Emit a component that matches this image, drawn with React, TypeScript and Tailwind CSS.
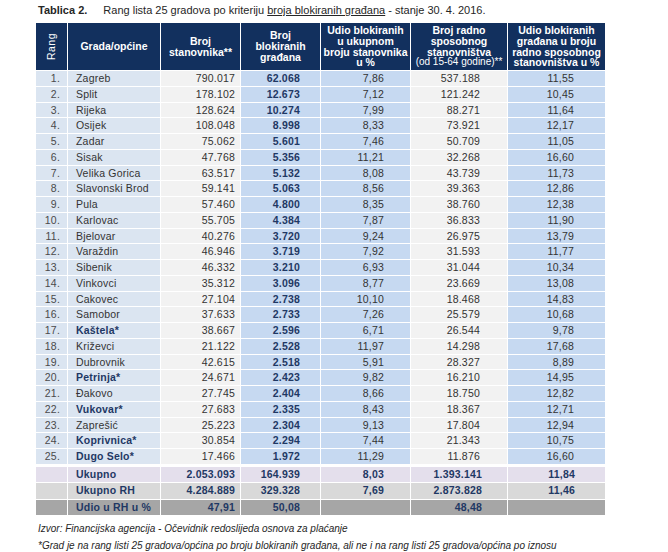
const rows: [string, string, string, string, string, string, boolean][] = [
  ["Zagreb", "790.017", "62.068", "7,86", "537.188", "11,55", false],
  ["Split", "178.102", "12.673", "7,12", "121.242", "10,45", false],
  ["Rijeka", "128.624", "10.274", "7,99", "88.271", "11,64", false],
  ["Osijek", "108.048", "8.998", "8,33", "73.921", "12,17", false],
  ["Zadar", "75.062", "5.601", "7,46", "50.709", "11,05", false],
  ["Sisak", "47.768", "5.356", "11,21", "32.268", "16,60", false],
  ["Velika Gorica", "63.517", "5.132", "8,08", "43.739", "11,73", false],
  ["Slavonski Brod", "59.141", "5.063", "8,56", "39.363", "12,86", false],
  ["Pula", "57.460", "4.800", "8,35", "38.760", "12,38", false],
  ["Karlovac", "55.705", "4.384", "7,87", "36.833", "11,90", false],
  ["Bjelovar", "40.276", "3.720", "9,24", "26.975", "13,79", false],
  ["Varaždin", "46.946", "3.719", "7,92", "31.593", "11,77", false],
  ["Sibenik", "46.332", "3.210", "6,93", "31.044", "10,34", false],
  ["Vinkovci", "35.312", "3.096", "8,77", "23.669", "13,08", false],
  ["Cakovec", "27.104", "2.738", "10,10", "18.468", "14,83", false],
  ["Samobor", "37.633", "2.733", "7,26", "25.579", "10,68", false],
  ["Kaštela*", "38.667", "2.596", "6,71", "26.544", "9,78", true],
  ["Križevci", "21.122", "2.528", "11,97", "14.298", "17,68", false],
  ["Dubrovnik", "42.615", "2.518", "5,91", "28.327", "8,89", false],
  ["Petrinja*", "24.671", "2.423", "9,82", "16.210", "14,95", true],
  ["Đakovo", "27.745", "2.404", "8,66", "18.750", "12,82", false],
  ["Vukovar*", "27.683", "2.335", "8,43", "18.367", "12,71", true],
  ["Zaprešić", "25.223", "2.304", "9,13", "17.804", "12,94", false],
  ["Koprivnica*", "30.854", "2.294", "7,44", "21.343", "10,75", true],
  ["Dugo Selo*", "17.466", "1.972", "11,29", "11.876", "16,60", true],
];

const totals = [
  { label: "Ukupno", bg: "bg-[#e4dfec]", v: ["2.053.093", "164.939", "8,03", "1.393.141", "11,84"] },
  { label: "Ukupno RH", bg: "bg-[#d9d9d9]", v: ["4.284.889", "329.328", "7,69", "2.873.828", "11,46"] },
  { label: "Udio u RH u %", bg: "bg-[#a6a6a6]", v: ["47,91", "50,08", "", "48,48", ""] },
];

const cols = "grid grid-cols-[31px_92px_79px_79px_89px_96px_97px] gap-x-[1px]";

const App = () => {
  return (
    <div className="h-[552px] w-[668px] overflow-hidden bg-white pl-[36px] pt-[4px] font-['Liberation_Sans',Arial,sans-serif] text-[#333]">
      <p className="h-[19px] pl-[2px] text-[11px] leading-[13px] text-[#262626]">
        <span className="mr-[16px] font-bold">Tablica 2.</span>
        Rang lista 25 gradova po kriteriju <span className="underline">broja blokiranih građana</span> - stanje 30. 4. 2016.
      </p>

      <div className="flex w-[569px] flex-col gap-y-[1px]">
        {/* header */}
        <div className={`${cols} h-[47px] text-center text-[10.5px] font-bold leading-[10.7px] text-white`}>
          <div className="flex items-center justify-center bg-[#12305e]">
            <span className="rotate-180 font-normal tracking-[0.5px] [writing-mode:vertical-rl]">Rang</span>
          </div>
          <div className="flex items-center justify-center bg-[#12305e]">Grada/općine</div>
          <div className="flex items-center justify-center bg-[#12305e]">Broj<br />stanovnika**</div>
          <div className="flex items-center justify-center bg-[#12305e]">Broj<br />blokiranih<br />građana</div>
          <div className="flex items-center justify-center bg-[#12305e]">Udio blokiranih<br />u ukupnom<br />broju stanovnika<br />u %</div>
          <div className="flex flex-col items-center justify-center bg-[#12305e]">
            <span>Broj radno<br />sposobnog<br />stanovništva</span>
            <span className="text-[10px] font-normal">(od 15-64 godine)**</span>
          </div>
          <div className="flex items-center justify-center bg-[#12305e]">Udio blokiranih<br />građana u broju<br />radno sposobnog<br />stanovništva u %</div>
        </div>

        {/* rows */}
        {rows.map(([name, stan, blok, udio, radno, pct, bold], i) => (
          <div key={name} className={`${cols} h-[14.76px] text-[10.5px] leading-[14.76px] tracking-[0.2px]`}>
            <div className="bg-[#dbe5f1] pr-[7px] text-right text-[#4a4a4a]">{i + 1}.</div>
            <div className={`bg-[#dbe5f1] pl-[8px] whitespace-nowrap ${bold ? "font-bold text-[#1f3864]" : ""}`}>{name}</div>
            <div className="bg-[#f2f2f2] pr-[5px] text-right">{stan}</div>
            <div className="bg-[#c6d9f1] pr-[20px] text-right font-bold text-[#1f3864]">{blok}</div>
            <div className="bg-[#c6d9f1] pr-[26px] text-right">{udio}</div>
            <div className="bg-[#f2f2f2] pr-[27px] text-right">{radno}</div>
            <div className="bg-[#c6d9f1] pr-[31px] text-right">{pct}</div>
          </div>
        ))}

        {/* totals */}
        {totals.map((t, i) => (
          <div
            key={t.label}
            className={`${cols} h-[15.5px] text-[10.5px] font-bold leading-[15.5px] tracking-[0.2px] text-[#1f3864] ${i === 0 ? "mt-[2px]" : ""}`}
          >
            <div className={t.bg}></div>
            <div className={`${t.bg} pl-[8px] whitespace-nowrap`}>{t.label}</div>
            <div className={`${t.bg} pr-[5px] text-right`}>{t.v[0]}</div>
            <div className={`${t.bg} pr-[20px] text-right`}>{t.v[1]}</div>
            <div className={`${t.bg} pr-[26px] text-right`}>{t.v[2]}</div>
            <div className={`${t.bg} pr-[25px] text-right`}>{t.v[3]}</div>
            <div className={`${t.bg} pr-[30px] text-right`}>{t.v[4]}</div>
          </div>
        ))}
      </div>

      <div className="pl-[2px] pt-[5px] text-[10px] italic leading-[17px] text-[#262626] whitespace-nowrap">
        <p>Izvor: Financijska agencija - Očevidnik redoslijeda osnova za plaćanje</p>
        <p>*Grad je na rang listi 25 gradova/općina po broju blokiranih građana, ali ne i na rang listi 25 gradova/općina po iznosu</p>
      </div>
    </div>
  );
};

export default App;
